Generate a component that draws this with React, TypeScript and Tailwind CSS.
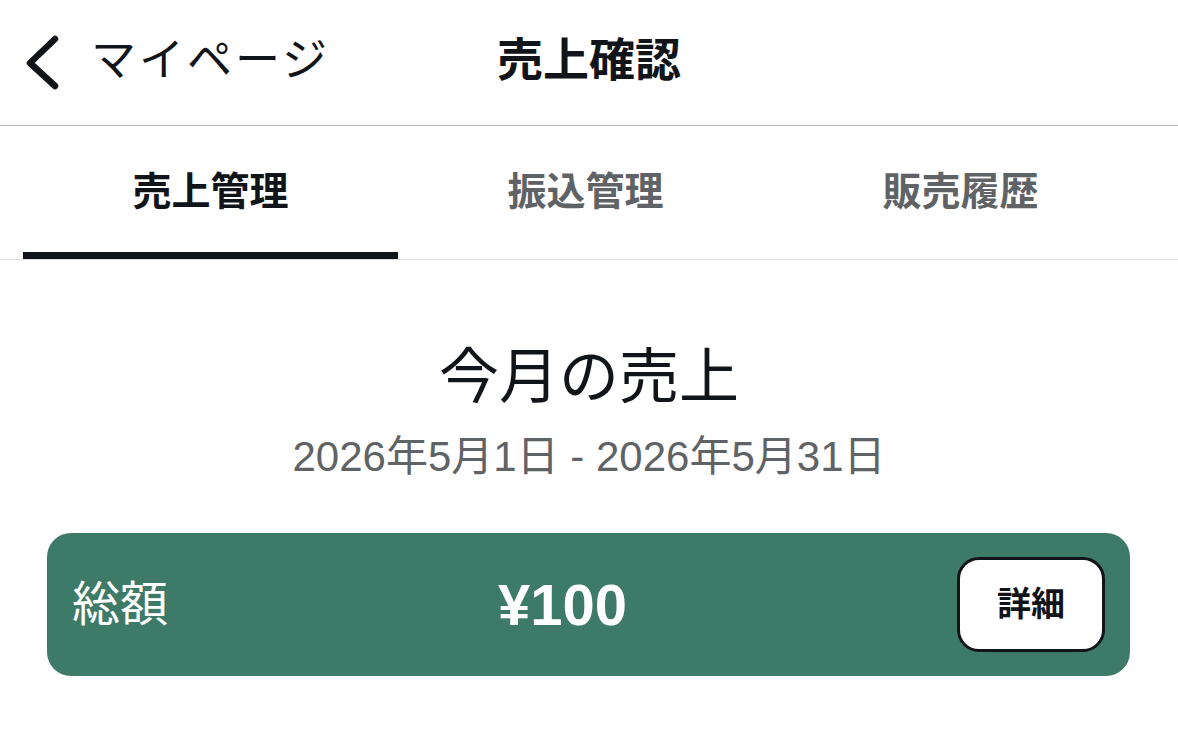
import React, { useState } from 'react';

const FONT = '"Liberation Sans", "Noto Sans CJK JP", sans-serif';

const TABS = ['売上管理', '振込管理', '販売履歴'];

function BackChevron() {
  return (
    <svg width="40" height="56" viewBox="0 0 40 56" fill="none">
      <path
        d="M33 4 L8 28 L33 51"
        stroke="#111418"
        strokeWidth="6.5"
        strokeLinecap="round"
        strokeLinejoin="round"
      />
    </svg>
  );
}

export default function App() {
  const [active, setActive] = useState(0);

  return (
    <div className="w-[1178px] h-[741px] bg-white text-[#111418] overflow-hidden" style={{ fontFamily: FONT }}>
      {/* ── Header ───────────────────────────── */}
      <header className="grid grid-cols-[1fr_auto_1fr] items-center h-[126px] border-b border-[#b4b4b4]">
        <button className="flex items-center gap-[29px] pl-[22px] text-[45px] leading-none tracking-[3px]">
          <BackChevron />
          <span className="-mt-[4px]">マイページ</span>
        </button>
        <h1 className="text-[46px] font-bold leading-none -mt-[6px]">売上確認</h1>
        <div />
      </header>

      {/* ── Tabs ─────────────────────────────── */}
      <nav className="grid grid-cols-3 pl-[23px] pr-[30px] border-b border-[#e2e2e2]">
        {TABS.map((tab, i) => (
          <button
            key={tab}
            onClick={() => setActive(i)}
            className={
              'h-[133px] flex items-center justify-center text-[39px] font-bold border-b-[7px] ' +
              (i === active ? 'text-[#111418] border-[#111418]' : 'text-[#5f6366] border-transparent')
            }
          >
            <span className="mt-[6px]">{tab}</span>
          </button>
        ))}
      </nav>

      {/* ── This month ───────────────────────── */}
      <section className="flex flex-col items-center pt-[82px]">
        <h2 className="text-[60px] leading-[1.2]">今月の売上</h2>
        <p className="mt-[18px] text-[42px] leading-[1.2] text-[#606366]">2026年5月1日 - 2026年5月31日</p>
      </section>

      <div className="pl-[47px] pr-[48px] mt-[51px]">
        <div className="flex items-center justify-between h-[143px] px-[25px] rounded-[24px] bg-[#3e7a68] text-white">
          <span className="text-[48px] leading-none">総額</span>
          <span className="text-[58px] font-bold leading-none">¥100</span>
          <button className="w-[148px] h-[95px] rounded-[22px] border-[3px] border-[#111418] bg-white text-[#111418] text-[34px] font-bold">
            詳細
          </button>
        </div>
      </div>
    </div>
  );
}
